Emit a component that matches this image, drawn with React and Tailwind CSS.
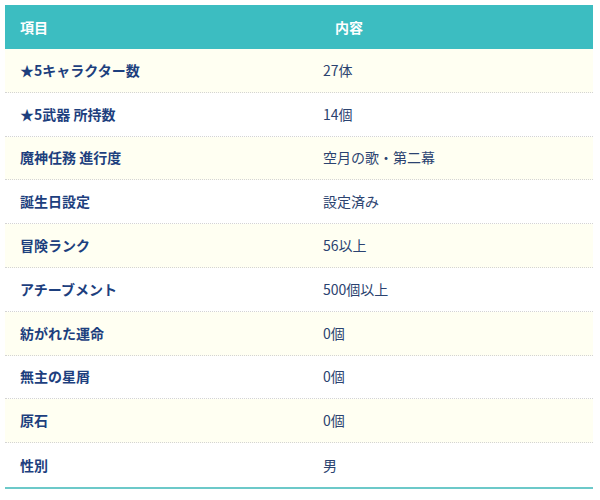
const rows = [
  ["★5キャラクター数", "27体"],
  ["★5武器 所持数", "14個"],
  ["魔神任務 進行度", "空月の歌・第二幕"],
  ["誕生日設定", "設定済み"],
  ["冒険ランク", "56以上"],
  ["アチーブメント", "500個以上"],
  ["紡がれた運命", "0個"],
  ["無主の星屑", "0個"],
  ["原石", "0個"],
  ["性別", "男"],
];

export default function App() {
  return (
    <div
      className="bg-white min-h-screen pt-[5px] pl-[5px]"
      style={{ fontFamily: '"Noto Sans CJK JP", "Noto Sans", sans-serif' }}
    >
      <div className="w-[588px] border-b-2 border-[#6cc9c9]">
        <div className="flex h-[44px] items-center bg-[#3cbdc1] text-white text-[14px] font-bold">
          <div className="w-[303px] pl-[15px]">項目</div>
          <div className="flex-1 pl-[27px]">内容</div>
        </div>
        {rows.map(([label, value], i) => (
          <div
            key={label}
            className={
              "flex h-[43.8px] items-center text-[14px] " +
              (i % 2 === 0 ? "bg-[#fffff2]" : "bg-white") +
              (i < rows.length - 1 ? " border-b border-dotted border-[#d4d4d4]" : "")
            }
          >
            <div className="w-[303px] pl-[15px] font-bold text-[#1d3f7e]">{label}</div>
            <div className="flex-1 pl-[15px] text-[#2b4370]">{value}</div>
          </div>
        ))}
      </div>
    </div>
  );
}
